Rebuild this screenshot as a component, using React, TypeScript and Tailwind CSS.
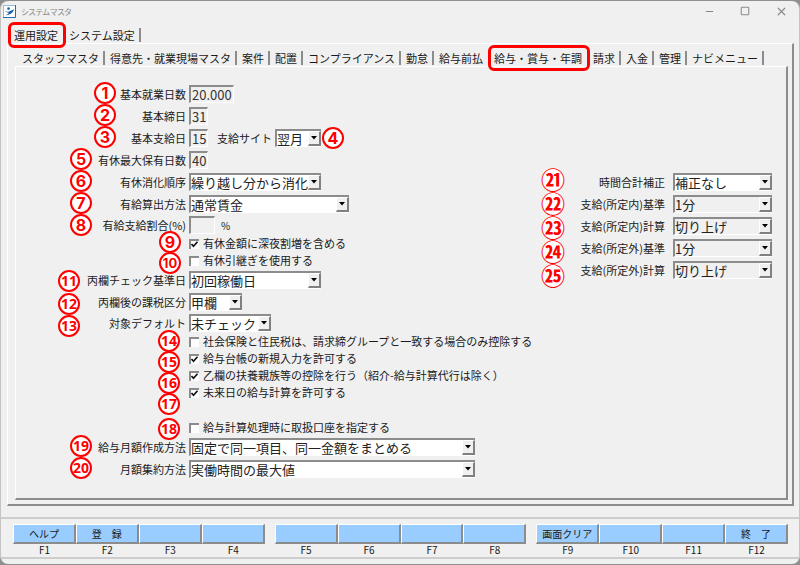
import React, { useState } from 'react';
import clsx from 'clsx';
import { Minus, Square, X } from 'lucide-react';

const MAIN_TABS = ['運用設定', 'システム設定'];

const SUB_TABS = [
  'スタッフマスタ',
  '得意先・就業現場マスタ',
  '案件',
  '配置',
  'コンプライアンス',
  '勤怠',
  '給与前払',
  '給与・賞与・年調',
  '請求',
  '入金',
  '管理',
  'ナビメニュー',
];

const FUNCTION_KEYS = [
  ['ヘルプ', '登　録', '', ''],
  ['', '', '', ''],
  ['画面クリア', '', '', '終　了'],
];

// 説明用の番号。座標はパネル左上から円の中心まで
const LEFT_MARKERS = [
  { no: '1', x: 89, y: 26 },
  { no: '2', x: 89, y: 48 },
  { no: '3', x: 89, y: 70 },
  { no: '4', x: 317, y: 71 },
  { no: '5', x: 65, y: 92 },
  { no: '6', x: 65, y: 114 },
  { no: '7', x: 65, y: 136 },
  { no: '8', x: 65, y: 158 },
  { no: '9', x: 154, y: 175 },
  { no: '10', x: 154, y: 196 },
  { no: '11', x: 53, y: 214 },
  { no: '12', x: 53, y: 237 },
  { no: '13', x: 53, y: 259 },
  { no: '14', x: 153, y: 274 },
  { no: '15', x: 153, y: 295 },
  { no: '16', x: 153, y: 316 },
  { no: '17', x: 153, y: 337 },
  { no: '18', x: 153, y: 362 },
  { no: '19', x: 65, y: 379 },
  { no: '20', x: 65, y: 401 },
];

const RIGHT_MARKERS = [
  { no: '㉑', x: 13, y: 112 },
  { no: '㉒', x: 13, y: 136 },
  { no: '㉓', x: 13, y: 160 },
  { no: '㉔', x: 13, y: 184 },
  { no: '㉕', x: 13, y: 208 },
];

interface MarkerProps {
  no: string;
  x: number;
  y: number;
}

const Marker: React.FC<MarkerProps> = ({ no, x, y }) => {
  const n = Number(no);
  return (
    <span
      className={clsx(
        'pointer-events-none absolute flex -translate-x-1/2 -translate-y-1/2 items-center justify-center rounded-full bg-white font-bold leading-none text-[#f00]',
        n <= 10 && "size-[22px] border-2 border-[#f00] font-['Inter',sans-serif]",
        n > 10 && "size-[22px] border-2 border-[#f00] font-['Open_Sans',sans-serif] text-[14px]",
        n < 10 && 'text-[16px]',
        n === 10 && 'text-[13px]',
        Number.isNaN(n) && "size-[22px] font-['Noto_Sans_CJK_JP',sans-serif] text-[24px]",
      )}
      style={{ left: x, top: y }}
    >
      {no}
    </span>
  );
};

interface TabStripProps {
  tabs: string[];
  active: string;
  onSelect: (tab: string) => void;
}

const TabStrip: React.FC<TabStripProps> = ({ tabs, active, onSelect }) => {
  const activeIndex = tabs.indexOf(active);
  return (
    <div role="tablist" className="flex">
      {tabs.map((tab, i) => (
        <button
          key={tab}
          type="button"
          role="tab"
          aria-selected={tab === active}
          onClick={() => onSelect(tab)}
          className="relative h-[15px] whitespace-nowrap pr-[5px] pl-[6px] leading-[15px]"
        >
          {tab}
          {i === activeIndex && (
            <span className="pointer-events-none absolute -top-[6px] -right-[3px] -bottom-[5px] left-0 rounded-md border-[3px] border-[#f00]" />
          )}
          {i !== activeIndex && i + 1 !== activeIndex && (
            <span className="absolute top-0 -right-px h-[14px] w-[2px] bg-[#8c8c8c]" />
          )}
        </button>
      ))}
    </div>
  );
};

interface FieldRowProps {
  id: string;
  label: string;
  short?: boolean;
  children: React.ReactNode;
}

const FieldRow: React.FC<FieldRowProps> = ({ id, label, short, children }) => (
  <div className={clsx('flex items-center', short ? 'h-5' : 'h-[22px]')}>
    <label htmlFor={id} className="mr-[3px] w-[170px] text-right">
      {label}
    </label>
    {children}
  </div>
);

interface TextFieldProps {
  id: string;
  value?: string;
  width: string;
  disabled?: boolean;
}

const TextField: React.FC<TextFieldProps> = ({ id, value, width, disabled }) => (
  <input
    id={id}
    type="text"
    defaultValue={value}
    disabled={disabled}
    className={clsx(
      'h-[18px] border-t-2 border-r border-b border-l-2 border-t-[#8c8c8c] border-r-white border-b-white border-l-[#8c8c8c] bg-[#f0f0f0] pl-px text-[13px] text-[#333] outline-none',
      width,
    )}
  />
);

interface ComboProps {
  id: string;
  value: string;
  width: string;
  gray?: boolean;
}

const Combo: React.FC<ComboProps> = ({ id, value, width, gray }) => (
  <span
    className={clsx(
      'relative flex h-[18px] border-t-2 border-b border-l-2 border-t-[#8c8c8c] border-b-white border-l-[#8c8c8c]',
      gray ? 'bg-[#f0f0f0]' : 'bg-white',
      width,
    )}
  >
    <select id={id} className="h-[15px] w-full appearance-none text-[13px] leading-[14px] text-[#222] outline-none">
      <option>{value}</option>
    </select>
    <span className="pointer-events-none absolute top-0 right-0 flex h-[15px] w-[13px] items-center justify-center border-t border-r-2 border-b-2 border-l border-t-white border-r-[#808080] border-b-[#808080] border-l-white bg-[#f0f0f0]">
      <svg viewBox="0 0 6 4" className="h-1 w-1.5" fill="#000">
        <path d="M0 0h6L3 3.5z" />
      </svg>
    </span>
  </span>
);

const CheckRow: React.FC<{ label: string; checked?: boolean }> = ({ label, checked }) => (
  <div className="flex h-[17px] items-center pl-[173px]">
    <label className="flex items-center gap-1 whitespace-nowrap">
      <span className="grid size-[10px]">
        <input
          type="checkbox"
          defaultChecked={checked}
          className="peer col-start-1 row-start-1 size-[10px] appearance-none border-t-2 border-l-2 border-[#8c8c8c] bg-white"
        />
        <svg
          viewBox="0 0 10 10"
          className="pointer-events-none col-start-1 row-start-1 hidden size-[10px] peer-checked:block"
          fill="none"
          stroke="#111"
          strokeWidth="1.7"
        >
          <path d="M2.5 5l2 2.2 4-4.4" />
        </svg>
      </span>
      {label}
    </label>
  </div>
);

const RightRow: React.FC<{ id: string; label: string; value: string; gray?: boolean }> = ({ id, label, value, gray }) => (
  <div className="flex h-[22px] items-center justify-end gap-2">
    <label htmlFor={id}>{label}</label>
    <Combo id={id} value={value} width="w-[99px]" gray={gray} />
  </div>
);

const AppIcon = () => (
  <svg viewBox="0 0 13 13" className="size-[13px]">
    <rect x="0.5" y="0.5" width="12" height="12" fill="#fff" stroke="#9dbbd8" />
    <path d="M12.5 0v12.5H0" fill="none" stroke="#2a6cb0" />
    <circle cx="5.5" cy="3.6" r="1.3" fill="#1461a8" />
    <path d="M1.8 5.2c1.5 1.7 3.7 2 5.4.9L11 4.3C10 7.4 8 9.900 2.800 10.200c1.900-.7 2.800-1.500 2.900-2.400C4 7.600 2.500 6.800 1.800 5.200z" fill="#1461a8" />
  </svg>
);

const TitleBar = () => (
  <header className="flex h-[21px] items-center justify-between pr-[11px] pl-[2px] text-[#8a8a8a]">
    <div className="flex items-center gap-[5px]">
      <AppIcon />
      <h1 className="text-[8px] leading-[14px] [font-feature-settings:'palt']">システムマスタ</h1>
    </div>
    <div className="flex items-center gap-[25px] pb-px">
      <button type="button" aria-label="最小化">
        <Minus size={11} strokeWidth={2.5} />
      </button>
      <button type="button" aria-label="最大化">
        <Square size={10} strokeWidth={2.5} />
      </button>
      <button type="button" aria-label="閉じる">
        <X size={13} strokeWidth={2.2} />
      </button>
    </div>
  </header>
);

const FunctionBar = () => (
  <footer className="mb-[5px] flex gap-[10px] border-y-2 border-[#cdcdcd] pt-[5px] pr-[11px] pl-[12px]">
    {FUNCTION_KEYS.map((group, g) => (
      <div key={g} className="grid flex-1 grid-cols-4">
        {group.map((caption, i) => {
          const key = `F${g * 4 + i + 1}`;
          return (
            <div key={key} className="text-center text-[10px]">
              <button
                type="button"
                aria-label={caption || key}
                className="block h-5 w-full border-t border-r-2 border-b-2 border-l border-t-white border-r-[#8c8c8c] border-b-[#8c8c8c] border-l-white bg-[#99ccff] leading-4 whitespace-pre"
              >
                {caption}
              </button>
              <span className="block h-[13px] leading-[12px]">{key}</span>
            </div>
          );
        })}
      </div>
    ))}
  </footer>
);

const PayrollSettings = () => (
  <div className="flex flex-1 justify-between">
    <div className="relative pt-4">
      <FieldRow id="workDays" label="基本就業日数">
        <TextField id="workDays" value="20.000" width="w-[45px]" />
      </FieldRow>
      <FieldRow id="closingDay" label="基本締日">
        <TextField id="closingDay" value="31" width="w-[19px]" />
      </FieldRow>
      <FieldRow id="payDay" label="基本支給日">
        <TextField id="payDay" value="15" width="w-[19px]" />
        <label htmlFor="paySite" className="mr-[3px] ml-[9px]">
          支給サイト
        </label>
        <Combo id="paySite" value="翌月" width="w-[46px]" />
      </FieldRow>
      <FieldRow id="maxLeave" label="有休最大保有日数">
        <TextField id="maxLeave" value="40" width="w-[19px]" />
      </FieldRow>
      <FieldRow id="leaveOrder" label="有休消化順序">
        <Combo id="leaveOrder" value="繰り越し分から消化" width="w-[132px]" />
      </FieldRow>
      <FieldRow id="leaveCalc" label="有給算出方法">
        <Combo id="leaveCalc" value="通常賃金" width="w-[160px]" />
      </FieldRow>
      <FieldRow id="leaveRate" label="有給支給割合(%)" short>
        <TextField id="leaveRate" width="w-[26px]" disabled />
        <span className="ml-[6px] text-[10px]">%</span>
      </FieldRow>
      <CheckRow label="有休金額に深夜割増を含める" checked />
      <CheckRow label="有休引継ぎを使用する" />
      <FieldRow id="heiBase" label="丙欄チェック基準日">
        <Combo id="heiBase" value="初回稼働日" width="w-[132px]" />
      </FieldRow>
      <FieldRow id="heiTax" label="丙欄後の課税区分">
        <Combo id="heiTax" value="甲欄" width="w-[53px]" />
      </FieldRow>
      <FieldRow id="targetDefault" label="対象デフォルト" short>
        <Combo id="targetDefault" value="未チェック" width="w-[82px]" />
      </FieldRow>
      <CheckRow label="社会保険と住民税は、請求締グループと一致する場合のみ控除する" />
      <CheckRow label="給与台帳の新規入力を許可する" checked />
      <CheckRow label="乙欄の扶養親族等の控除を行う（紹介-給与計算代行は除く）" checked />
      <CheckRow label="未来日の給与計算を許可する" checked />
      <div className="h-[18px]" />
      <CheckRow label="給与計算処理時に取扱口座を指定する" />
      <FieldRow id="monthlyMethod" label="給与月額作成方法">
        <Combo id="monthlyMethod" value="固定で同一項目、同一金額をまとめる" width="w-[286px]" />
      </FieldRow>
      <FieldRow id="summaryMethod" label="月額集約方法">
        <Combo id="summaryMethod" value="実働時間の最大値" width="w-[286px]" />
      </FieldRow>
      {LEFT_MARKERS.map(m => (
        <Marker key={m.no} {...m} />
      ))}
    </div>

    <div className="relative mr-[14px] w-[232px] pt-[104px]">
      <RightRow id="timeFix" label="時間合計補正" value="補正なし" />
      <RightRow id="innerBase" label="支給(所定内)基準" value="1分" gray />
      <RightRow id="innerCalc" label="支給(所定内)計算" value="切り上げ" gray />
      <RightRow id="outerBase" label="支給(所定外)基準" value="1分" gray />
      <RightRow id="outerCalc" label="支給(所定外)計算" value="切り上げ" gray />
      {RIGHT_MARKERS.map(m => (
        <Marker key={m.no} {...m} />
      ))}
    </div>
  </div>
);

export default function App() {
  const [mainTab, setMainTab] = useState('運用設定');
  const [subTab, setSubTab] = useState('給与・賞与・年調');

  return (
    <div className="flex min-h-screen flex-col bg-[#8f8f8f] py-px font-['Noto_Sans_CJK_JP',sans-serif] text-[11px] leading-[15px] text-[#1a1a1a]">
      <div className="flex flex-1 flex-col rounded-lg border-x border-[#c4c4c4] bg-[#f0f0f0]">
        <TitleBar />

        <main className="mr-[5px] mb-[11px] ml-[6px] flex flex-1 flex-col pt-[6px]">
          <div className="pl-px">
            <TabStrip tabs={MAIN_TABS} active={mainTab} onSelect={setMainTab} />
          </div>
          <section className="flex flex-1 flex-col border-t border-r-2 border-b-2 border-l border-t-white border-r-[#8c8c8c] border-b-[#8c8c8c] border-l-white pt-[7px] pr-1 pb-1 pl-[7px]">
            <div className="pl-px">
              <TabStrip tabs={SUB_TABS} active={subTab} onSelect={setSubTab} />
            </div>
            <div className="flex flex-1 flex-col border-t border-r-2 border-b-2 border-l border-t-white border-r-[#8c8c8c] border-b-[#8c8c8c] border-l-white">
              <PayrollSettings />
            </div>
          </section>
        </main>

        <FunctionBar />
      </div>
    </div>
  );
}
